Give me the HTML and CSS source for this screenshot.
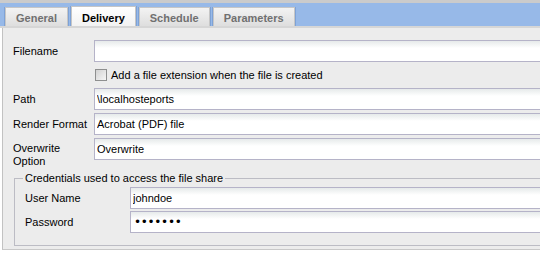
FILE: index.html
```html
<!DOCTYPE html>
<html>
<head>
<meta charset="utf-8">
<link rel="stylesheet" href="styles.css">
</head>
<body>
<div class="tabbar">
  <div class="tab">General</div>
  <div class="tab active">Delivery</div>
  <div class="tab">Schedule</div>
  <div class="tab">Parameters</div>
</div>
<div class="sep"></div>
<div class="panel">
  <div class="form">
    <label class="lbl">Filename</label>
    <input class="field" type="text" value="">
    <span></span>
    <div class="check"><span class="box"></span><span>Add a file extension when the file is created</span></div>
    <label class="lbl">Path</label>
    <input class="field" type="text" value="\localhosteports">
    <label class="lbl">Render Format</label>
    <input class="field" type="text" value="Acrobat (PDF) file">
    <label class="lbl two">Overwrite<br>Option</label>
    <input class="field" type="text" value="Overwrite">
  </div>
  <fieldset class="creds">
    <legend>Credentials used to access the file share</legend>
    <div class="cgrid">
      <label class="lbl">User Name</label>
      <input class="field" type="text" value="johndoe">
      <label class="lbl">Password</label>
      <input class="field pw" type="password" value="1234567">
    </div>
  </fieldset>
</div>
</body>
</html>
```
FILE: styles.css
```css
html, body {
  margin: 0;
  padding: 0;
  background: #fff;
  overflow: hidden;
}
body {
  font-family: "Liberation Sans", Arial, sans-serif;
  font-size: 11px;
  color: #000;
  width: 540px;
  height: 255px;
}
.tabbar {
  border-top: 3px solid #cbcbcb;
  background: #97b9e8;
  height: 23px;
  display: flex;
  align-items: flex-end;
  padding-left: 5px;
  gap: 3px;
}
.tab {
  height: 19px;
  box-sizing: border-box;
  padding: 3px 10px 0;
  border: 1px solid #c6c6c6;
  border-bottom: none;
  background: linear-gradient(#f3f3f3, #dedede);
  color: #707070;
  font-weight: bold;
  font-size: 11px;
  line-height: 14px;
  box-shadow: -1px 0 0 #7ea2d6, 1px 0 0 #7ea2d6;
}
.tab.active {
  height: 20px;
  background: linear-gradient(#ffffff, #f2f2f2);
  color: #000;
  padding-top: 4px;
}
.sep {
  height: 2px;
  background: #d6d6d6;
}
.panel {
  margin-left: 2px;
  border-left: 1px solid #c2c2c2;
  border-bottom: 1px solid #c8c8c8;
  background: #ececec;
  height: 222px;
  overflow: hidden;
  padding: 12px 0 0 10px;
  box-sizing: border-box;
}
.form {
  display: grid;
  grid-template-columns: 81px 1fr;
  row-gap: 3px;
  margin-right: -10px;
}
.lbl {
  display: flex;
  align-items: center;
  height: 22px;
}
.lbl.two {
  display: block;
  height: auto;
  line-height: 13px;
  padding-top: 4px;
}
.field {
  height: 22px;
  box-sizing: border-box;
  border: 1px solid #b5b3c8;
  background: linear-gradient(#e6eaea 0, #ffffff 7px);
  font-family: "Liberation Sans", Arial, sans-serif;
  font-size: 11px;
  padding: 0 2px;
  margin: 0;
  color: #000;
  outline: none;
  width: 100%;
}
.check {
  height: 20px;
  display: flex;
  align-items: center;
  gap: 4px;
  padding-left: 1px;
}
.box {
  width: 10px;
  height: 10px;
  border: 1px solid #8e8f8f;
  background: linear-gradient(135deg, #d2d2d2, #f6f6f6);
}
.creds {
  margin: 4px -10px 0 1px;
  border: 1px solid #bcbcc4;
  padding: 2px 0 12px 8px;
}
.creds legend {
  padding: 0 2px;
  line-height: 13px;
  color: #000;
}
.cgrid {
  display: grid;
  grid-template-columns: 105px 1fr;
  row-gap: 2px;
  padding-left: 2px;
}
.pw {
  font-family: "DejaVu Sans", sans-serif;
  font-size: 12px;
  letter-spacing: -0.3px;
  padding-left: 3px;
}
```
